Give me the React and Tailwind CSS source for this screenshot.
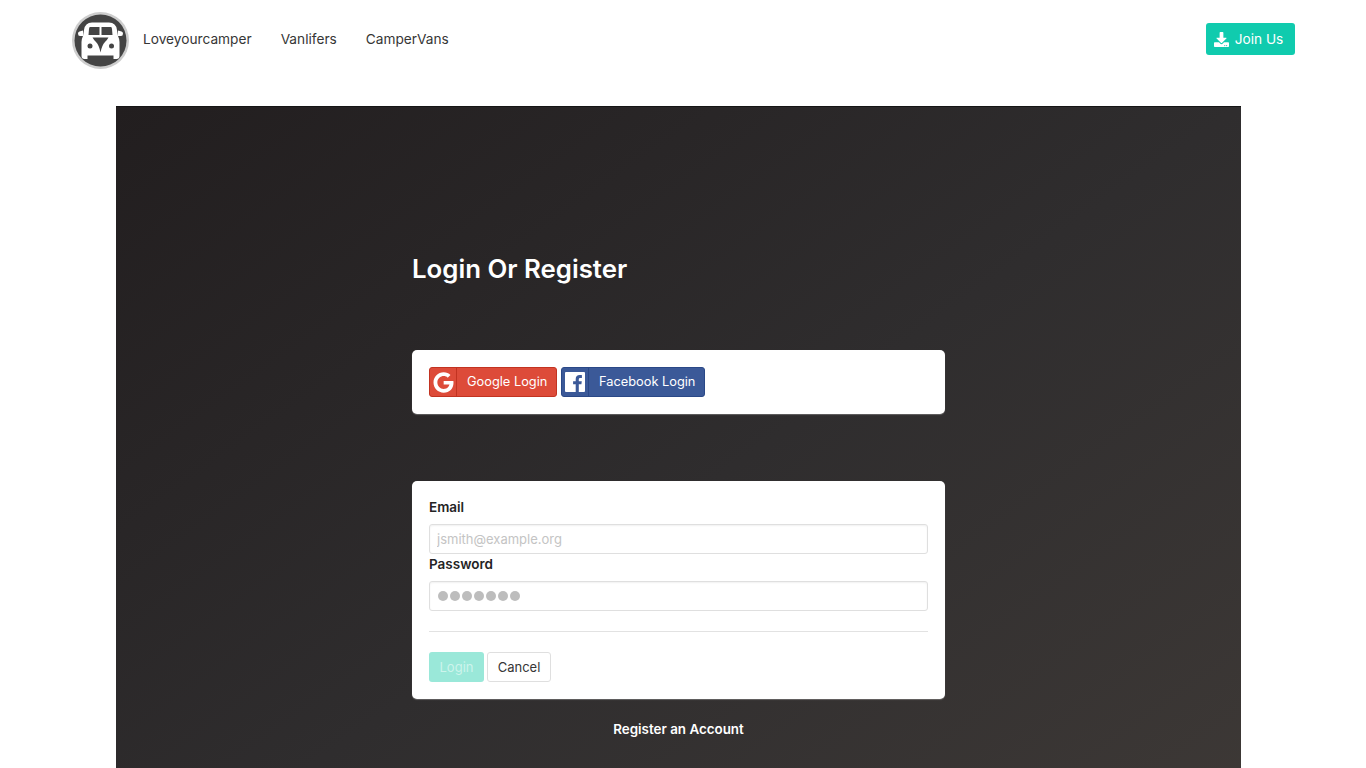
import { FaDownload, FaGoogle } from 'react-icons/fa';

function VanLogo() {
  return (
    <svg width="57" height="57" viewBox="0 0 57 57" className="mt-[2px] shrink-0">
      <circle cx="28.5" cy="28.5" r="28.5" fill="#cdcdcd" />
      <circle cx="28.5" cy="28.5" r="26" fill="#444444" />
      {/* body */}
      <path d="M20 10.500h17q7 0 8 7.500l1 6q1.500 3 1.500 6V44q0 3-3 3H12.500q-3 0-3-3V30q0-3 1.500-6l1-6q1-7.500 8-7.500z" fill="#fff" />
      {/* mirrors */}
      <path d="M6 21.500q0-1.500 1.500-2l3.500-1v5.500H8q-2 0-2-2.500zM51 21.500q0-1.500-1.500-2l-3.500-1v5.500h3q2 0 2-2.500z" fill="#fff" />
      {/* windows */}
      <path d="M18 15h9.500v8H16.500l.5-6q.2-2 1-2zM39 15h-9.500v8h11l-.5-6q-.2-2-1-2z" fill="#444444" />
      {/* nose */}
      <path d="M20.500 25.500h16q-1 2-3.500 4.500-3 3-4.500 10.500-1.500-7.500-4.500-10.500-2.500-2.500-3.500-4.500z" fill="#444444" />
      <circle cx="18" cy="34" r="2.500" fill="#444444" />
      <circle cx="39.500" cy="34" r="2.500" fill="#444444" />
      <rect x="15.500" y="43.500" width="26" height="3.500" fill="#444444" />
    </svg>
  );
}

function FacebookMark() {
  return (
    <svg width="20" height="20" viewBox="0 0 20 20">
      <rect width="20" height="20" rx="1" fill="#fff" />
      <path d="M13.800 20v-7.700h2.600l.4-3h-3V7.400c0-.9.300-1.500 1.500-1.500h1.600V3.200c-.3 0-1.200-.1-2.300-.1-2.300 0-3.900 1.400-3.900 4v2.200H8.100v3h2.600V20z" fill="#3b5998" />
    </svg>
  );
}

function SocialButton({ bg, border, width, cell, icon, label, labelClass }) {
  return (
    <a className={`flex h-[30px] items-center rounded-[3px] border text-[12.8px] text-white ${bg} ${border} ${width}`}>
      <span className={`flex h-full shrink-0 items-center justify-center border-r ${border} ${cell}`}>{icon}</span>
      <span className={labelClass}>{label}</span>
    </a>
  );
}

export default function App() {
  return (
    <div className="h-screen overflow-hidden bg-white font-['Inter',sans-serif] text-[#363636]">
      {/* Navbar */}
      <nav className="flex h-[79px] items-center justify-between pl-[72px] pr-[71px]">
        <div className="flex items-center">
          <VanLogo />
          <a className="ml-[14px] text-[13.7px]">Loveyourcamper</a>
          <a className="ml-[29px] text-[13.7px]">Vanlifers</a>
          <a className="ml-[29px] text-[13.7px]">CamperVans</a>
        </div>
        <a className="mb-[1px] flex h-[32px] w-[89px] items-center justify-center gap-[6px] rounded-[3px] bg-[#10cbae] pr-[4px] text-[13.7px] text-white">
          <FaDownload size={15} />
          Join Us
        </a>
      </nav>

      {/* Hero */}
      <div className="ml-[116px] mr-[125px] mt-[27px] h-[800px] border-t border-[#151515] bg-gradient-to-br from-[#221e1f] via-[#2f2d2e] to-[#3f3a37] pl-[296px] pt-[146px]">
        <div className="w-[533px]">
          <h1 className="text-[25.8px] font-semibold leading-[32px] text-white">Login Or Register</h1>

          <div className="mt-[65px] flex h-[64px] items-center gap-[4px] rounded-[5px] bg-white px-[17px] shadow-[0_1px_1px_rgba(255,255,255,0.25)]">
            <SocialButton
              bg="bg-[#dd4b39]"
              border="border-[#c23321]"
              width="w-[128px]"
              cell="w-[27px]"
              icon={<FaGoogle size={21} />}
              label="Google Login"
              labelClass="pl-[10px]"
            />
            <SocialButton
              bg="bg-[#3b5998]"
              border="border-[#2a4887]"
              width="w-[144px]"
              cell="w-[27px]"
              icon={<FacebookMark />}
              label="Facebook Login"
              labelClass="pl-[10px]"
            />
          </div>

          <div className="mt-[67px] h-[218px] rounded-[5px] bg-white px-[17px] pt-[18px] shadow-[0_1px_1px_rgba(255,255,255,0.25)]">
            <label className="block text-[13.5px] font-semibold leading-[17px] text-[#242424]">Email</label>
            <input
              placeholder="jsmith@example.org"
              className="mt-[8px] block h-[30px] w-full rounded-[3px] border border-[#dfdfdf] px-[7px] text-[13px] placeholder:text-[#c4c4c4] shadow-[inset_0_1px_2px_rgba(10,10,10,0.06)]"
            />
            <label className="mt-[2px] block text-[13.5px] font-semibold leading-[17px] text-[#242424]">Password</label>
            <div className="mt-[8px] flex h-[30px] items-center gap-[2px] rounded-[3px] border border-[#dfdfdf] px-[8px] shadow-[inset_0_1px_2px_rgba(10,10,10,0.06)]">
              {[0, 1, 2, 3, 4, 5, 6].map((i) => (
                <span key={i} className="h-[10px] w-[10px] rounded-full bg-[#bdbdbd]" />
              ))}
            </div>
            <hr className="mt-[20px] border-[#e2e2e2]" />
            <div className="mt-[20px] flex gap-[3px]">
              <button className="h-[30px] w-[55px] rounded-[3px] bg-[#9ae8d9] pt-[2px] text-[13px] text-[#cdf4ec]">Login</button>
              <button className="h-[30px] w-[64px] rounded-[3px] border border-[#dfdfdf] bg-white pt-[2px] text-[13px] text-[#363636]">Cancel</button>
            </div>
          </div>

          <p className="mt-[20px] text-center text-[13.4px] font-semibold leading-[20px] text-white">Register an Account</p>
        </div>
      </div>
    </div>
  );
}
